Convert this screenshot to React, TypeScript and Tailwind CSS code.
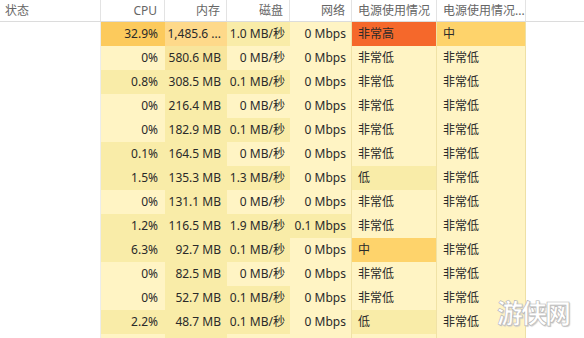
const L0 = "bg-[#fff4c4]";
const L1 = "bg-[#f9eca8]";
const L2 = "bg-[#f8e59c]";
const HI = "bg-[#fcca5c]";
const MH = "bg-[#fed98a]";
const OR = "bg-[#f5682b]";
const MID = "bg-[#fed36b]";

type Cell = [string, string];
type Row = { cpu: Cell; mem: Cell; disk: Cell; net: Cell; pow: Cell; trend: Cell };

const rows: Row[] = [
  { cpu: ["32.9%", HI], mem: ["1,485.6 ...", MH], disk: ["1.0 MB/秒", L1], net: ["0 Mbps", L0], pow: ["非常高", OR], trend: ["中", MID] },
  { cpu: ["0%", L0], mem: ["580.6 MB", L2], disk: ["0 MB/秒", L0], net: ["0 Mbps", L0], pow: ["非常低", L0], trend: ["非常低", L0] },
  { cpu: ["0.8%", L1], mem: ["308.5 MB", L1], disk: ["0.1 MB/秒", L1], net: ["0 Mbps", L0], pow: ["非常低", L0], trend: ["非常低", L0] },
  { cpu: ["0%", L0], mem: ["216.4 MB", L1], disk: ["0 MB/秒", L0], net: ["0 Mbps", L0], pow: ["非常低", L0], trend: ["非常低", L0] },
  { cpu: ["0%", L0], mem: ["182.9 MB", L1], disk: ["0.1 MB/秒", L1], net: ["0 Mbps", L0], pow: ["非常低", L0], trend: ["非常低", L0] },
  { cpu: ["0.1%", L1], mem: ["164.5 MB", L1], disk: ["0 MB/秒", L0], net: ["0 Mbps", L0], pow: ["非常低", L0], trend: ["非常低", L0] },
  { cpu: ["1.5%", L1], mem: ["135.3 MB", L1], disk: ["1.3 MB/秒", L1], net: ["0 Mbps", L0], pow: ["低", L1], trend: ["非常低", L0] },
  { cpu: ["0%", L0], mem: ["131.1 MB", L1], disk: ["0 MB/秒", L0], net: ["0 Mbps", L0], pow: ["非常低", L0], trend: ["非常低", L0] },
  { cpu: ["1.2%", L1], mem: ["116.5 MB", L1], disk: ["1.9 MB/秒", L1], net: ["0.1 Mbps", L1], pow: ["非常低", L0], trend: ["非常低", L0] },
  { cpu: ["6.3%", L1], mem: ["92.7 MB", L1], disk: ["0.1 MB/秒", L1], net: ["0 Mbps", L0], pow: ["中", MID], trend: ["非常低", L0] },
  { cpu: ["0%", L0], mem: ["82.5 MB", L1], disk: ["0 MB/秒", L0], net: ["0 Mbps", L0], pow: ["非常低", L0], trend: ["非常低", L0] },
  { cpu: ["0%", L0], mem: ["52.7 MB", L1], disk: ["0.1 MB/秒", L1], net: ["0 Mbps", L0], pow: ["非常低", L0], trend: ["非常低", L0] },
  { cpu: ["2.2%", L1], mem: ["48.7 MB", L1], disk: ["0.1 MB/秒", L1], net: ["0 Mbps", L0], pow: ["低", L1], trend: ["非常低", L0] },
  { cpu: ["", L0], mem: ["", L1], disk: ["", L0], net: ["", L0], pow: ["", L0], trend: ["", L0] },
];

const cols = "grid grid-cols-[101px_64px_62px_63px_62px_85px_89px_1fr]";

export default function App() {
  return (
    <div
      className="relative h-[338px] w-[584px] overflow-hidden bg-white text-[12px]"
      style={{ fontFamily: '"Noto Sans", "Noto Sans CJK SC", sans-serif' }}
    >
      <div className={`${cols} h-[22px] border-b border-[#dcdcdc] text-[#666] leading-[21px]`}>
        <div className="border-r border-[#e3e3e3] pl-[5px]">状态</div>
        <div className="border-r border-[#e3e3e3] pr-[7px] text-right">CPU</div>
        <div className="border-r border-[#e3e3e3] pr-[6px] text-right">内存</div>
        <div className="border-r border-[#e3e3e3] pr-[6px] text-right">磁盘</div>
        <div className="border-r border-[#e3e3e3] pr-[6px] text-right">网络</div>
        <div className="border-r border-[#e3e3e3] pl-[6px]">电源使用情况</div>
        <div className="border-r border-[#e3e3e3] pl-[6px] truncate">电源使用情况...</div>
        <div />
      </div>
      {rows.map((r, i) => (
        <div key={i} className={`${cols} h-[24px] text-[#2a2a2a] leading-[24px]`}>
          <div className="border-r border-[#ececec]" />
          <div className={`${r.cpu[1]} pr-[7px] text-right`}>{r.cpu[0]}</div>
          <div className={`${r.mem[1]} pr-[6px] text-right whitespace-nowrap`}>{r.mem[0]}</div>
          <div className={`${r.disk[1]} pr-[5px] text-right whitespace-nowrap`}>{r.disk[0]}</div>
          <div className={`${r.net[1]} border-r border-[#f0e2a6] pr-[5px] text-right whitespace-nowrap`}>{r.net[0]}</div>
          <div className={`${r.pow[1]} border-r border-[#f0e2a6] pl-[6px]`}>{r.pow[0]}</div>
          <div className={`${r.trend[1]} border-r border-[#eee0a6] pl-[6px]`}>{r.trend[0]}</div>
          <div />
        </div>
      ))}
      {/* watermark */}
      <div
        className="absolute left-[497px] top-[292px] text-[26px] font-bold text-white tracking-[-2px]"
        style={{
          fontFamily: '"Noto Sans CJK SC", sans-serif',
          WebkitTextStroke: "0.6px #b5b5b5",
          textShadow: "1px 1px 1px #c8c8c8",
        }}
      >
        游侠网
      </div>
    </div>
  );
}
